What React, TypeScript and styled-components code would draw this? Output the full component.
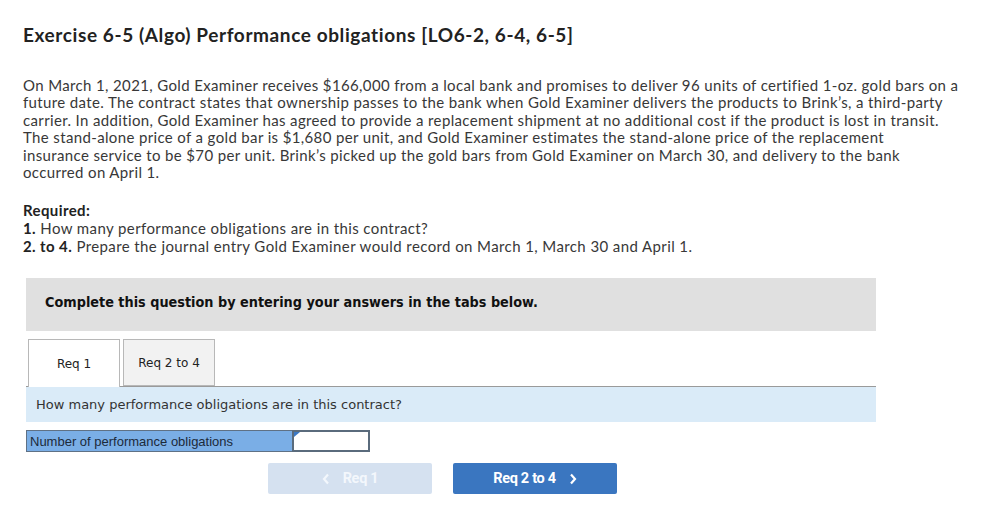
import React from 'react'
import styled, { createGlobalStyle } from 'styled-components'

const GlobalStyle = createGlobalStyle`
  body {
    margin: 0;
    background: #ffffff;
    font-family: 'Lato', 'Open Sans', sans-serif;
    color: #333333;
  }
`

const Page = styled.div`
  width: 1001px;
  padding: 24px 0 0 23px;
  box-sizing: border-box;
`

const Title = styled.h1`
  margin: 0;
  font-size: 19px;
  line-height: 22px;
  font-weight: 700;
  letter-spacing: 0.6px;
  color: #222222;
`

const Paragraph = styled.p`
  margin: 31px 0 0;
  font-size: 15px;
  line-height: 17.4px;
  letter-spacing: 0.36px;
  color: #383838;
  white-space: nowrap;
`

const Required = styled.div`
  margin-top: 20px;
  font-size: 15px;
  line-height: 18px;
  letter-spacing: 0.4px;
  color: #383838;
`

const Strong = styled.span`
  font-weight: 700;
  color: #222222;
`

const Panel = styled.div`
  margin: 23px 0 0 3px;
  width: 850px;
`

const Notice = styled.div`
  height: 53px;
  box-sizing: border-box;
  padding: 0 0 6px 19px;
  background: #e0e0e0;
  display: flex;
  align-items: center;
  font-family: 'DejaVu Sans Condensed', 'DejaVu Sans', sans-serif;
  font-stretch: condensed;
  font-weight: 700;
  font-size: 14.3px;
  color: #111111;
`

const TabBar = styled.div`
  margin-top: 8px;
  display: flex;
  gap: 3px;
  padding-left: 2px;
  border-bottom: 1px solid #9a9a9a;
  height: 47px;
`

const Tab = styled.div<{ active?: boolean }>`
  width: 92px;
  height: ${(p) => (p.active ? '48px' : '47px')};
  box-sizing: border-box;
  border: 1px solid #b8b8b8;
  border-bottom: ${(p) => (p.active ? 'none' : '1px solid #b8b8b8')};
  background: ${(p) => (p.active ? '#ffffff' : '#f2f2f2')};
  display: flex;
  align-items: center;
  justify-content: center;
  font-family: 'DejaVu Sans', Verdana, sans-serif;
  font-size: 12px;
  color: #222222;
  position: relative;
  z-index: 1;
`

const QuestionBar = styled.div`
  height: 35px;
  background: #daebf8;
  display: flex;
  align-items: center;
  padding-left: 10px;
  font-family: 'DejaVu Sans', Verdana, sans-serif;
  font-size: 13px;
  color: #333333;
`

const AnswerRow = styled.div`
  margin-top: 8px;
  display: flex;
  height: 22px;
`

const Label = styled.div`
  width: 266px;
  box-sizing: border-box;
  background: #7aaee6;
  border: 1px solid #5f7185;
  border-right: none;
  display: flex;
  align-items: center;
  padding-left: 3px;
  font-family: 'Liberation Sans', Arial, sans-serif;
  font-size: 13px;
  color: #1c2a3a;
`

const InputCell = styled.div`
  width: 78px;
  box-sizing: border-box;
  border: 2px solid #5a6b7c;
  background: #ffffff;
  position: relative;
`

const Corner = styled.div`
  position: absolute;
  left: 0;
  top: 0;
  width: 0;
  height: 0;
  border-top: 5px solid #3b78c4;
  border-right: 6px solid transparent;
`

const Nav = styled.div`
  margin: 11px 0 0 242px;
  display: flex;
  gap: 21px;
`

const NavButton = styled.div<{ disabled?: boolean }>`
  width: 164px;
  height: 31px;
  border-radius: 2px;
  background: ${(p) => (p.disabled ? '#d5e1f0' : '#3a76c0')};
  color: ${(p) => (p.disabled ? '#f3f7fc' : '#ffffff')};
  display: flex;
  align-items: center;
  justify-content: center;
  gap: 13px;
  font-family: 'Roboto', 'Liberation Sans', sans-serif;
  font-weight: 700;
  font-size: 14.5px;
  letter-spacing: -0.3px;
`

const Chevron: React.FC<{ dir: 'left' | 'right' }> = ({ dir }) => (
  <svg width="8" height="12" viewBox="0 0 8 12">
    <path
      d={dir === 'left' ? 'M6 1.5 L2 6 L6 10.5' : 'M2 1.5 L6 6 L2 10.5'}
      fill="none"
      stroke="currentColor"
      strokeWidth="2.2"
    />
  </svg>
)

export default function App() {
  return (
    <>
      <GlobalStyle />
      <Page>
        <Title>Exercise 6-5 (Algo) Performance obligations [LO6-2, 6-4, 6-5]</Title>
        <Paragraph>
          On March 1, 2021, Gold Examiner receives $166,000 from a local bank and promises to deliver 96 units of certified 1-oz. gold bars on a
          <br />
          future date. The contract states that ownership passes to the bank when Gold Examiner delivers the products to Brink’s, a third-party
          <br />
          carrier. In addition, Gold Examiner has agreed to provide a replacement shipment at no additional cost if the product is lost in transit.
          <br />
          The stand-alone price of a gold bar is $1,680 per unit, and Gold Examiner estimates the stand-alone price of the replacement
          <br />
          insurance service to be $70 per unit. Brink’s picked up the gold bars from Gold Examiner on March 30, and delivery to the bank
          <br />
          occurred on April 1.
        </Paragraph>
        <Required>
          <Strong>Required:</Strong>
          <br />
          <Strong>1.</Strong> How many performance obligations are in this contract?
          <br />
          <Strong>2. to 4.</Strong> Prepare the journal entry Gold Examiner would record on March 1, March 30 and April 1.
        </Required>
        <Panel>
          <Notice>Complete this question by entering your answers in the tabs below.</Notice>
          <TabBar>
            <Tab active>Req 1</Tab>
            <Tab>Req 2 to 4</Tab>
          </TabBar>
          <QuestionBar>How many performance obligations are in this contract?</QuestionBar>
          <AnswerRow>
            <Label>Number of performance obligations</Label>
            <InputCell>
              <Corner />
            </InputCell>
          </AnswerRow>
          <Nav>
            <NavButton disabled>
              <Chevron dir="left" />
              Req 1
            </NavButton>
            <NavButton>
              Req 2 to 4
              <Chevron dir="right" />
            </NavButton>
          </Nav>
        </Panel>
      </Page>
    </>
  )
}
